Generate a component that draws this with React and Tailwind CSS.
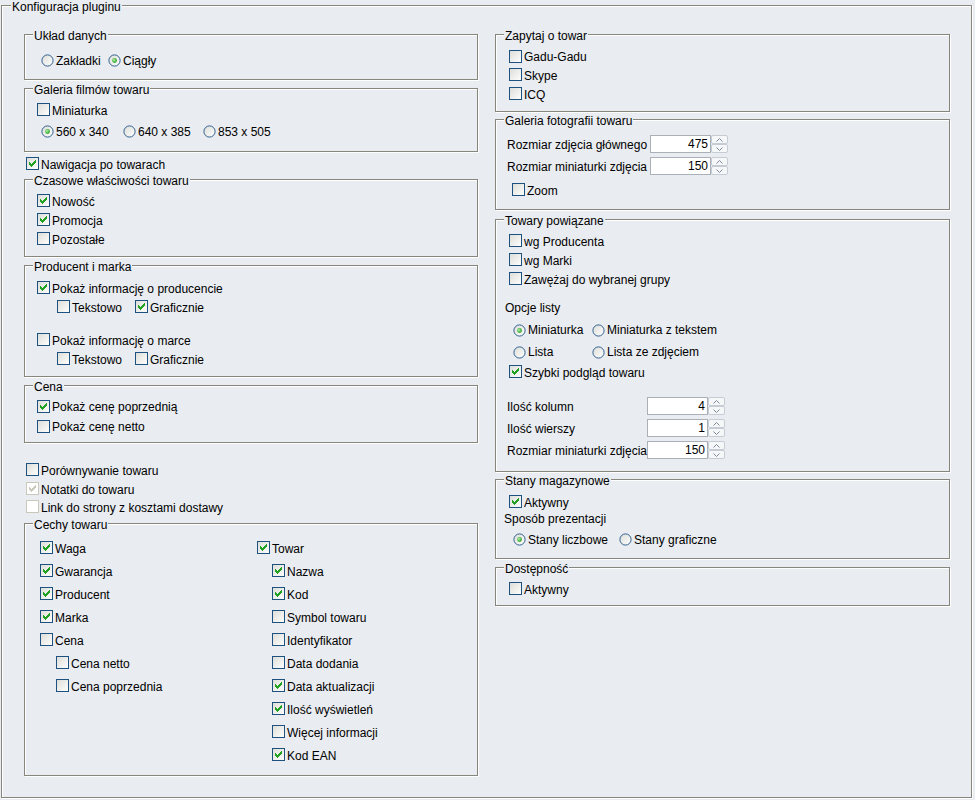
import React from "react";

const CHECK_PATH =
  "M9 3h1v1h-1z M8 4h2v1h-2z M3 5h1v1h-1z M7 5h3v1h-3z M3 6h2v1h-2z M6 6h3v1h-3z M3 7h5v1h-5z M4 8h3v1h-3z M5 9h1v1h-1z";

function Box({ checked, disabled }) {
  return (
    <svg width="13" height="13" viewBox="0 0 13 13" className="shrink-0 block" shapeRendering="crispEdges">
      <defs>
        <linearGradient id="cbgrad" x1="0" y1="0" x2="1" y2="1">
          <stop offset="0" stopColor="#dcdcd7" />
          <stop offset="1" stopColor="#ffffff" />
        </linearGradient>
      </defs>
      <rect
        x="0.5"
        y="0.5"
        width="12"
        height="12"
        fill={disabled ? "#ffffff" : "url(#cbgrad)"}
        stroke={disabled ? "#cac8bb" : "#1c5180"}
      />
      {checked && <path d={CHECK_PATH} fill={disabled ? "#cac8bb" : "#21a121"} />}
    </svg>
  );
}

function Dot({ checked }) {
  return (
    <svg width="13" height="13" viewBox="0 0 13 13" className="shrink-0 block">
      <defs>
        <linearGradient id="rbgrad" x1="0" y1="0" x2="1" y2="1">
          <stop offset="0" stopColor="#dcdcd7" />
          <stop offset="1" stopColor="#ffffff" />
        </linearGradient>
        <radialGradient id="rdot" cx="0.4" cy="0.4" r="0.6">
          <stop offset="0" stopColor="#b8f0a8" />
          <stop offset="1" stopColor="#21a121" />
        </radialGradient>
      </defs>
      <circle cx="6.5" cy="6.5" r="5.6" fill="url(#rbgrad)" stroke="#2f5f8f" strokeWidth="1" />
      {checked && <circle cx="6.5" cy="6.5" r="2.4" fill="url(#rdot)" />}
    </svg>
  );
}

function CB({ label, checked, disabled, className = "" }) {
  return (
    <div className={"flex items-center " + className}>
      <Box checked={checked} disabled={disabled} />
      <span className="ml-[2px] pt-[2px] leading-[14px] whitespace-nowrap">{label}</span>
    </div>
  );
}

function RB({ label, checked, className = "" }) {
  return (
    <div className={"flex items-center " + className}>
      <Dot checked={checked} />
      <span className="ml-[2px] leading-[14px] whitespace-nowrap">{label}</span>
    </div>
  );
}

function Chev({ down }) {
  return (
    <svg width="7" height="4" viewBox="0 0 7 4" className="block">
      <path
        d={down ? "M0.5 0.5 L3.5 3.5 L6.5 0.5" : "M0.5 3.5 L3.5 0.5 L6.5 3.5"}
        fill="none"
        stroke="#7d8a9a"
        strokeWidth="1"
      />
    </svg>
  );
}

function Spin({ value }) {
  return (
    <div className="flex h-[18px]">
      <div className="w-[61px] h-[18px] bg-white border border-[#a9b0b8] text-right pr-[2px] leading-[16px]">
        {value}
      </div>
      <div className="w-[17px] h-[18px] flex flex-col">
        <div className="h-[9px] border border-[#c6ccd4] rounded-[2px] bg-[#f6f7f9] flex items-center justify-center">
          <Chev />
        </div>
        <div className="h-[9px] border border-[#c6ccd4] rounded-[2px] bg-[#f6f7f9] flex items-center justify-center">
          <Chev down />
        </div>
      </div>
    </div>
  );
}

function SpinRow({ label, value, labelClass }) {
  return (
    <div className="flex items-center h-[22px]">
      <span className={"pt-[2px] leading-[14px] whitespace-nowrap " + labelClass}>{label}</span>
      <Spin value={value} />
    </div>
  );
}

function Fs({ legend, className = "", legendClass = "ml-[8px] px-[1px] pt-[3px] leading-[10px]", children }) {
  return (
    <fieldset
      className={
        "border border-[#86867c] shadow-[1px_1px_0_#ffffff,inset_1px_1px_0_#ffffff] min-w-0 " + className
      }
    >
      <legend className={"bg-[#e9ecf0] whitespace-nowrap " + legendClass}>{legend}</legend>
      {children}
    </fieldset>
  );
}

export default function App() {
  return (
    <div className="w-[975px] h-[800px] bg-[#e9ecf0] pl-[1px] font-['Liberation_Sans',Arial,sans-serif] text-[12px] text-black overflow-hidden">
      <Fs
        legend="Konfiguracja pluginu"
        className="w-[971px] h-[798px]"
        legendClass="ml-[9px] px-[1px] pt-[3px] leading-[8px]"
      >
        <div className="flex pl-[22px] gap-[17px]">
          {/* LEFT COLUMN */}
          <div className="w-[454px] flex flex-col">
            <Fs legend="Układ danych" className="mt-[17px] h-[52px]">
              <div className="pt-[10px] pl-[16px] flex">
                <RB label="Zakładki" className="h-[19px] w-[67px]" />
                <RB label="Ciągły" checked className="h-[19px]" />
              </div>
            </Fs>

            <Fs legend="Galeria filmów towaru" className="mt-[2px] h-[70px]">
              <div className="pt-[5px] pl-[12px]">
                <CB label="Miniaturka" className="h-[19px]" />
              </div>
              <div className="mt-[3px] pl-[16px] flex">
                <RB label="560 x 340" checked className="h-[19px] w-[82px]" />
                <RB label="640 x 385" className="h-[19px] w-[80px]" />
                <RB label="853 x 505" className="h-[19px]" />
              </div>
            </Fs>

            <CB label="Nawigacja po towarach" checked className="mt-[3px] ml-[2px] h-[17px]" />

            <Fs legend="Czasowe właściwości towaru" className="mt-[1px] h-[84px]">
              <div className="pt-[5px] pl-[12px]">
                <CB label="Nowość" checked className="h-[19px]" />
                <CB label="Promocja" checked className="h-[19px]" />
                <CB label="Pozostałe" className="h-[19px]" />
              </div>
            </Fs>

            <Fs legend="Producent i marka" className="mt-[2px] h-[118px]">
              <div className="pt-[6px] pl-[12px]">
                <CB label="Pokaż informację o producencie" checked className="h-[19px]" />
                <div className="flex pl-[20px]">
                  <CB label="Tekstowo" className="h-[19px] w-[78px]" />
                  <CB label="Graficznie" checked className="h-[19px]" />
                </div>
                <CB label="Pokaż informację o marce" className="mt-[14px] h-[19px]" />
                <div className="flex pl-[20px]">
                  <CB label="Tekstowo" className="h-[19px] w-[78px]" />
                  <CB label="Graficznie" className="h-[19px]" />
                </div>
              </div>
            </Fs>

            <Fs legend="Cena" className="mt-[2px] h-[64px]">
              <div className="pt-[5px] pl-[12px]">
                <CB label="Pokaż cenę poprzednią" checked className="h-[18px]" />
                <CB label="Pokaż cenę netto" className="mt-[2px] h-[18px]" />
              </div>
            </Fs>

            <div className="mt-[17px] pl-[2px]">
              <CB label="Porównywanie towaru" className="h-[19px]" />
              <CB label="Notatki do towaru" checked disabled className="h-[19px]" />
              <CB label="Link do strony z kosztami dostawy" disabled className="h-[17px]" />
            </div>

            <Fs legend="Cechy towaru" className="mt-[2px] h-[259px]">
              <div className="pt-[6px] pl-[15px] flex">
                <div className="w-[217px]">
                  <CB label="Waga" checked className="h-[23px]" />
                  <CB label="Gwarancja" checked className="h-[23px]" />
                  <CB label="Producent" checked className="h-[23px]" />
                  <CB label="Marka" checked className="h-[23px]" />
                  <CB label="Cena" className="h-[23px]" />
                  <CB label="Cena netto" className="h-[23px] ml-[16px]" />
                  <CB label="Cena poprzednia" className="h-[23px] ml-[16px]" />
                </div>
                <div>
                  <CB label="Towar" checked className="h-[23px]" />
                  <div className="ml-[15px]">
                    <CB label="Nazwa" checked className="h-[23px]" />
                    <CB label="Kod" checked className="h-[23px]" />
                    <CB label="Symbol towaru" className="h-[23px]" />
                    <CB label="Identyfikator" className="h-[23px]" />
                    <CB label="Data dodania" className="h-[23px]" />
                    <CB label="Data aktualizacji" checked className="h-[23px]" />
                    <CB label="Ilość wyświetleń" checked className="h-[23px]" />
                    <CB label="Więcej informacji" className="h-[23px]" />
                    <CB label="Kod EAN" checked className="h-[23px]" />
                  </div>
                </div>
              </div>
            </Fs>
          </div>

          {/* RIGHT COLUMN */}
          <div className="w-[455px] flex flex-col">
            <Fs legend="Zapytaj o towar" className="mt-[17px] h-[84px]">
              <div className="pt-[6px] pl-[13px]">
                <CB label="Gadu-Gadu" className="h-[18px]" />
                <CB label="Skype" className="h-[19px]" />
                <CB label="ICQ" className="h-[19px]" />
              </div>
            </Fs>

            <Fs legend="Galeria fotografii towaru" className="mt-[1px] h-[97px]">
              <div className="pt-[7px] pl-[11px]">
                <SpinRow label="Rozmiar zdjęcia głównego" value="475" labelClass="w-[143px]" />
                <SpinRow label="Rozmiar miniaturki zdjęcia" value="150" labelClass="w-[143px]" />
              </div>
              <div className="mt-[3px] pl-[16px]">
                <CB label="Zoom" className="h-[19px]" />
              </div>
            </Fs>

            <Fs legend="Towary powiązane" className="mt-[3px] h-[259px]">
              <div className="pt-[5px] pl-[13px]">
                <CB label="wg Producenta" className="h-[19px]" />
                <CB label="wg Marki" className="h-[19px]" />
                <CB label="Zawężaj do wybranej grupy" className="h-[19px]" />
              </div>
              <div className="mt-[11px] pl-[9px] h-[20px] flex items-center">
                <span className="leading-[14px] pb-[2px]">Opcje listy</span>
              </div>
              <div className="pl-[17px]">
                <div className="flex h-[22px] items-center">
                  <RB label="Miniaturka" checked className="w-[79px]" />
                  <RB label="Miniaturka z tekstem" />
                </div>
                <div className="flex h-[22px] items-center">
                  <RB label="Lista" className="w-[79px]" />
                  <RB label="Lista ze zdjęciem" />
                </div>
              </div>
              <div className="pl-[13px]">
                <CB label="Szybki podgląd towaru" checked className="h-[17px]" />
              </div>
              <div className="mt-[15px] pl-[11px]">
                <SpinRow label="Ilość kolumn" value="4" labelClass="w-[140px]" />
                <SpinRow label="Ilość wierszy" value="1" labelClass="w-[140px]" />
                <SpinRow label="Rozmiar miniaturki zdjęcia" value="150" labelClass="w-[140px]" />
              </div>
            </Fs>

            <Fs legend="Stany magazynowe" className="mt-[1px] h-[86px]">
              <div className="pt-[6px] pl-[13px]">
                <CB label="Aktywny" checked className="h-[19px]" />
              </div>
              <div className="h-[16px] pt-[1px] pl-[8px] leading-[14px]">Sposób prezentacji</div>
              <div className="mt-[3px] pl-[17px] flex">
                <RB label="Stany liczbowe" checked className="h-[19px] w-[106px]" />
                <RB label="Stany graficzne" className="h-[19px]" />
              </div>
            </Fs>

            <Fs legend="Dostępność" className="mt-[2px] h-[45px]">
              <div className="pt-[5px] pl-[13px]">
                <CB label="Aktywny" className="h-[19px]" />
              </div>
            </Fs>
          </div>
        </div>
      </Fs>
    </div>
  );
}
